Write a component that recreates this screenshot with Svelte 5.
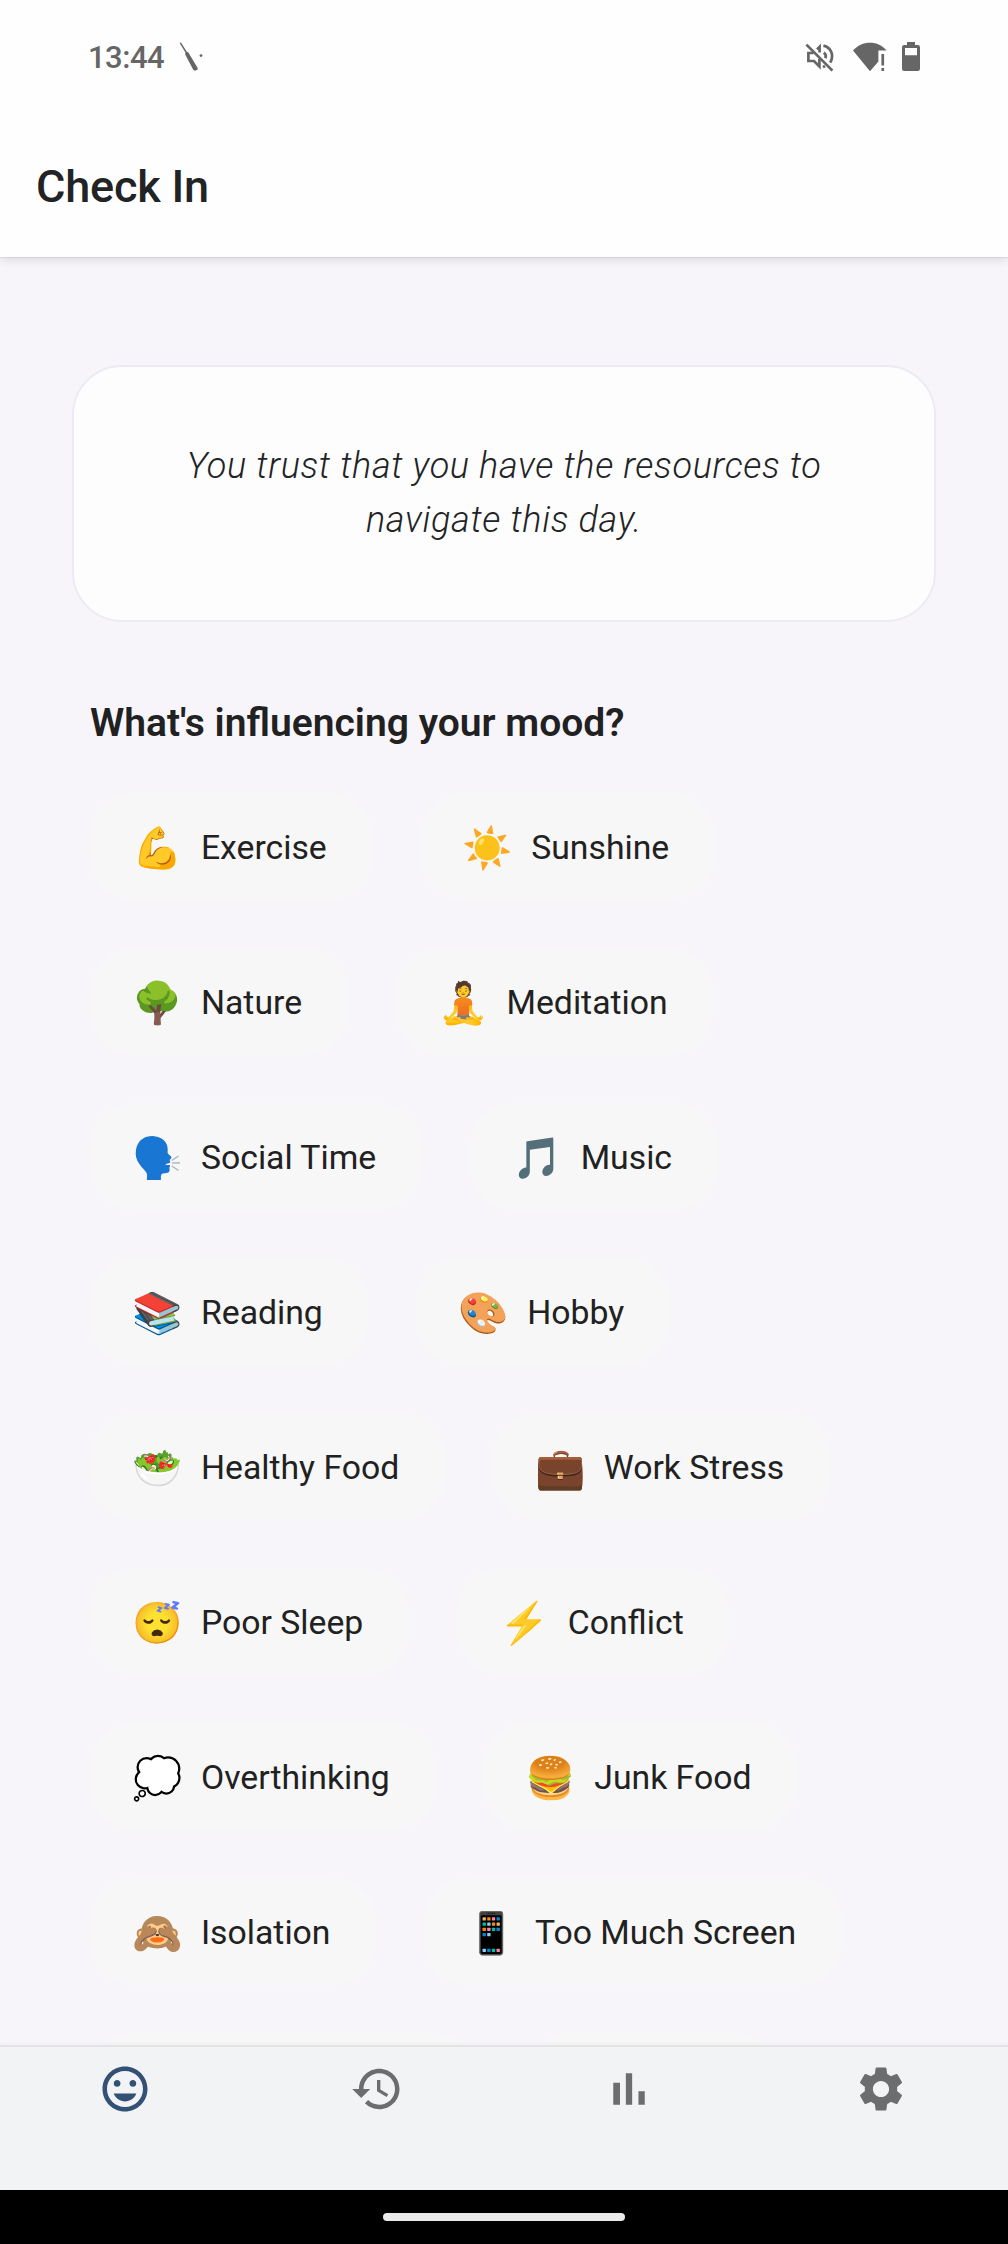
<script>
  const factors = [
    ['💪', 'Exercise'],
    ['☀️', 'Sunshine'],
    ['🌳', 'Nature'],
    ['🧘', 'Meditation'],
    ['🗣️', 'Social Time'],
    ['🎵', 'Music'],
    ['📚', 'Reading'],
    ['🎨', 'Hobby'],
    ['🥗', 'Healthy Food'],
    ['💼', 'Work Stress'],
    ['😴', 'Poor Sleep'],
    ['⚡', 'Conflict'],
    ['💭', 'Overthinking'],
    ['🍔', 'Junk Food'],
    ['🙈', 'Isolation'],
    ['📱', 'Too Much Screen']
  ];

  // Widths of the chips that are scrolled under the tab bar.
  const clipped = [388, 251];

  const tabs = [
    {
      label: 'Check In',
      active: true,
      path: 'M11.99 2C6.47 2 2 6.48 2 12s4.47 10 9.99 10C17.52 22 22 17.52 22 12S17.52 2 11.99 2zM12 20c-4.42 0-8-3.58-8-8s3.58-8 8-8 8 3.58 8 8-3.58 8-8 8zM15.5 11c.83 0 1.5-.67 1.5-1.5S16.33 8 15.5 8 14 8.67 14 9.5s.67 1.5 1.5 1.5zM8.5 11c.83 0 1.5-.67 1.5-1.5S9.33 8 8.5 8 7 8.67 7 9.5 7.67 11 8.5 11zM12 17.5c2.33 0 4.31-1.46 5-3.5H7c.8 2.04 2.67 3.5 5 3.5z'
    },
    {
      label: 'History',
      path: 'M13 3c-4.97 0-9 4.03-9 9H1l3.89 3.89.07.14L9 12H6c0-3.87 3.13-7 7-7s7 3.13 7 7-3.13 7-7 7c-1.93 0-3.68-.79-4.94-2.06l-1.42 1.42C8.27 19.99 10.51 21 13 21c4.97 0 9-4.03 9-9s-4.03-9-9-9zm-1 5v5l4.28 2.54.72-1.21-3.5-2.08V8H12z'
    },
    { label: 'Insights', path: 'M5 9.2h3V19H5zM10.6 5h2.8v14h-2.8zM16.2 13H19v6h-2.8z' },
    {
      label: 'Settings',
      path: 'M19.14 12.94c.04-.3.06-.61.06-.94 0-.32-.02-.64-.07-.94l2.03-1.58c.18-.14.23-.41.12-.61l-1.92-3.32c-.12-.22-.37-.29-.59-.22l-2.39.96c-.5-.38-1.03-.7-1.62-.94l-.36-2.54c-.04-.24-.24-.41-.48-.41h-3.84c-.24 0-.43.17-.47.41l-.36 2.54c-.59.24-1.13.57-1.62.94l-2.39-.96c-.22-.08-.47 0-.59.22L2.74 8.87c-.12.21-.08.47.12.61l2.03 1.58c-.05.3-.09.63-.09.94s.02.64.07.94l-2.03 1.58c-.18.14-.23.41-.12.61l1.92 3.32c.12.22.37.29.59.22l2.39-.96c.5.38 1.03.7 1.62.94l.36 2.54c.05.24.24.41.48.41h3.84c.24 0 .44-.17.47-.41l.36-2.54c.59-.24 1.13-.56 1.62-.94l2.39.96c.22.08.47 0 .59-.22l1.92-3.32c.12-.22.07-.47-.12-.61l-2.01-1.58zM12 15.6c-1.98 0-3.6-1.62-3.6-3.6s1.62-3.6 3.6-3.6 3.6 1.62 3.6 3.6-1.62 3.6-3.6 3.6z'
    }
  ];
</script>

<div class="screen">
  <header class="top">
    <div class="status">
      <div class="left">
        <span class="clock">13:44</span>
        <svg width="25" height="30" viewBox="0 0 25 30" fill="#666">
          <path d="M0.6 1 2 .6 7.6 9.6l1.8.8 9.4 15.8-.4 1.6-2.4 1-1.6-.8L6.2 12.4l.2-1.8z" />
          <circle cx="22" cy="13.6" r="1.4" />
        </svg>
      </div>
      <div class="right">
        <svg width="29" height="30" viewBox="0 0 29 30" fill="none" stroke="#666" stroke-width="2.7">
          <path d="M8.500 11H3.400v8H9l5.400 5.400V17" />
          <path d="M12 7.400l2.600-2.600v5.600M18.800 10.600c2 1.400 2.400 3.400 1.600 5.600" />
          <path d="M18.400 3.600c8.600 2 10.600 10.600 6.800 17M20 24l-2 1.200" />
          <path d="M1.400 2.600 27.400 28.600" />
        </svg>
        <svg class="wifi" width="34" height="30" viewBox="0 0 34 30" fill="#666">
          <path d="M0 8.6C4.500 3.400 10.500.8 17 .8s12.500 2.600 16.600 7.800H25.400V19.400L17 29.200z" />
          <path d="M28.400 12h2.700v11.500h-2.700zM28.400 26h2.700v3h-2.700z" />
        </svg>
        <svg width="18" height="30" viewBox="0 0 18 30" fill="#666">
          <path
            fill-rule="evenodd"
            d="M5 0h8v3h2.800Q18 3 18 5.200v21.600Q18 29 15.800 29H2.200Q0 29 0 26.800V5.200Q0 3 2.200 3H5zM3 6v7.200h12V6z"
          />
        </svg>
      </div>
    </div>
    <h1>Check In</h1>
  </header>

  <main>
    <blockquote>You trust that you have the resources to navigate this day.</blockquote>
    <h2>What's influencing your mood?</h2>
    <div class="chips">
      {#each factors as [emoji, name]}
        <button class="chip"><span class="emoji">{emoji}</span><span>{name}</span></button>
      {/each}
      {#each clipped as width}
        <div class="chip" style="width: {width}px"></div>
      {/each}
    </div>
  </main>

  <nav>
    {#each tabs as tab}
      <button class="tab" class:active={tab.active} aria-label={tab.label}>
        <svg width="54" height="54" viewBox="0 0 24 24" fill="currentColor"><path d={tab.path} /></svg>
      </button>
    {/each}
  </nav>
  <footer><div class="pill"></div></footer>
</div>

<style>
  :global(body) {
    margin: 0;
  }
  .screen {
    width: 1008px;
    height: 2244px;
    display: flex;
    flex-direction: column;
    overflow: hidden;
    background: #f7f5fa;
    color: #212121;
    font-family: Roboto, 'Liberation Sans', sans-serif;
  }
  button {
    border: 0;
    margin: 0;
    padding: 0;
    background: none;
    font: inherit;
    color: inherit;
  }
  .top {
    flex: none;
    height: 257px;
    background: #fefefe;
    box-shadow: 0 1px 1px rgba(0, 0, 0, 0.06), 0 2px 10px rgba(0, 0, 0, 0.13);
    z-index: 1;
  }
  .status {
    height: 114px;
    padding: 0 88px;
    display: flex;
    align-items: center;
    justify-content: space-between;
    box-sizing: border-box;
  }
  .left,
  .right {
    display: flex;
    align-items: center;
  }
  .left {
    gap: 15px;
  }
  .right {
    height: 30px;
  }
  .wifi {
    margin: 0 15px 0 19px;
  }
  .clock {
    font-size: 31px;
    font-weight: 500;
    letter-spacing: -0.5px;
    color: #666;
  }
  h1 {
    margin: 0;
    padding-left: 36px;
    font-size: 45px;
    line-height: 145px;
    font-weight: 500;
    letter-spacing: -0.2px;
    color: #212325;
  }
  main {
    flex: none;
    height: 1788px;
    box-sizing: border-box;
    padding: 108px 72px 0;
    overflow: hidden;
  }
  blockquote {
    margin: 0;
    height: 257px;
    box-sizing: border-box;
    padding: 72px 90px;
    border: 2px solid #ecebf3;
    border-radius: 50px;
    background: #fdfdfe;
    font-size: 36px;
    line-height: 54px;
    font-weight: 300;
    font-style: italic;
    letter-spacing: 0.675px;
    text-align: center;
    color: #212325;
  }
  h2 {
    margin: 76px 18px 45px;
    font-size: 39px;
    line-height: 50px;
    font-weight: 600;
  }
  .chips {
    display: flex;
    flex-wrap: wrap;
    gap: 48px;
    margin: 0 18px;
  }
  .chip {
    height: 107px;
    box-sizing: border-box;
    padding: 2px 45.5px 0 42.5px;
    display: flex;
    align-items: center;
    gap: 18px;
    border-radius: 45px;
    background: #f7f7f7;
    font-size: 33.75px;
    white-space: nowrap;
  }
  .emoji {
    font-family: 'Noto Color Emoji', sans-serif;
    font-size: 40.5px;
    line-height: 48px;
  }
  nav {
    flex: none;
    height: 145px;
    box-sizing: border-box;
    display: grid;
    grid-template-columns: repeat(4, 252px);
    border-top: 2px solid #e4e4e6;
    background: #f1f3f5;
    box-shadow: 0 -1px 4px rgba(0, 0, 0, 0.04);
    z-index: 1;
  }
  .tab {
    display: flex;
    justify-content: center;
    padding: 15px 2px 0 0;
    color: #6c6d6f;
  }
  .active {
    color: #325175;
  }
  footer {
    flex: none;
    height: 54px;
    display: flex;
    align-items: center;
    justify-content: center;
    background: #000;
    z-index: 1;
  }
  .pill {
    width: 242px;
    height: 8px;
    border-radius: 4px;
    background: #ebebeb;
  }
</style>
